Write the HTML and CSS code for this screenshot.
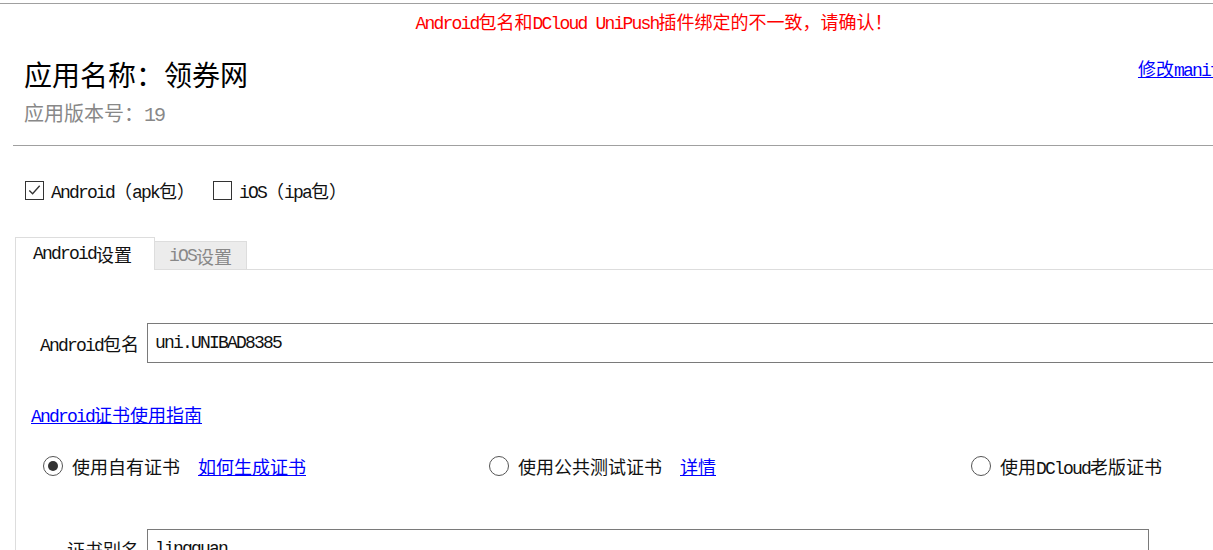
FILE: index.html
```html
<!DOCTYPE html>
<html lang="zh-CN">
<head>
<meta charset="utf-8">
<title>App 打包配置</title>
<link rel="stylesheet" href="styles.css">
</head>
<body>
<div class="page">
  <div class="topline"></div>
  <p class="warn"><span class="en">Android</span>包名和<span class="en">DCloud UniPush</span>插件绑定的不一致，请确认！</p>

  <header class="header">
    <div class="app-info">
      <h1 class="app-name">应用名称：领券网</h1>
      <p class="app-version">应用版本号：<span class="en">19</span></p>
    </div>
    <a class="link manifest-link" href="#">修改<span class="en">manifest.json</span></a>
  </header>

  <hr class="divider">

  <div class="platforms">
    <label class="check">
      <span class="box checked"><svg viewBox="0 0 18 18" width="18" height="18"><polyline points="3.5,9.5 7,13 14.5,4.5" fill="none" stroke="#333" stroke-width="1.4"/></svg></span>
      <span class="check-text"><span class="en">Android</span>（<span class="en">apk</span>包）</span>
    </label>
    <label class="check">
      <span class="box"></span>
      <span class="check-text"><span class="en">iOS</span>（<span class="en">ipa</span>包）</span>
    </label>
  </div>

  <div class="tabs">
    <div class="tab active"><span class="en">Android</span>设置</div>
    <div class="tab inactive"><span class="en">iOS</span>设置</div>
  </div>

  <section class="panel">
    <div class="form-row first">
      <span class="form-label"><span class="en">Android</span>包名</span>
      <input class="text-input wide" type="text" value="uni.UNIBAD8385">
    </div>

    <a class="link guide-link" href="#"><span class="en">Android</span>证书使用指南</a>

    <div class="radio-row">
      <div class="radio-item r1">
        <span class="radio checked"></span>
        <span class="radio-text">使用自有证书</span>
        <a class="link radio-link" href="#">如何生成证书</a>
      </div>
      <div class="radio-item r2">
        <span class="radio"></span>
        <span class="radio-text">使用公共测试证书</span>
        <a class="link radio-link" href="#">详情</a>
      </div>
      <div class="radio-item r3">
        <span class="radio"></span>
        <span class="radio-text">使用<span class="en">DCloud</span>老版证书</span>
      </div>
    </div>

    <div class="form-row second">
      <span class="form-label">证书别名</span>
      <input class="text-input narrow" type="text" value="lingquan">
    </div>
  </section>
</div>
</body>
</html>
```

FILE: styles.css
```css
html, body {
  margin: 0;
  padding: 0;
  overflow: hidden;
  background: #fff;
}

body {
  font-family: "Noto Sans CJK SC", "Noto Sans", sans-serif;
  font-size: 18px;
  color: #111;
}

.page {
  width: 1308px;
}

.en {
  font-family: "Liberation Mono", "DejaVu Sans Mono", monospace;
  letter-spacing: -0.1em;
  line-height: 0;
}

.topline {
  margin-top: 3px;
  border-top: 1px solid #a0a0a0;
}

.warn {
  margin: 5px 0 0;
  line-height: 24px;
  text-align: center;
  color: #ff0000;
}

.header {
  display: flex;
  justify-content: space-between;
  align-items: flex-start;
  margin-top: 23px;
  padding: 0 17px 0 24px;
}

.app-name {
  margin: 0;
  font-size: 28px;
  font-weight: normal;
  line-height: 36px;
  color: #000;
}

.app-version {
  margin: 7px 0 0;
  font-size: 20px;
  line-height: 28px;
  color: #888;
}

.link {
  color: #0000ff;
  text-decoration: underline;
}

.manifest-link {
  margin-top: 0;
  line-height: 24px;
}

.divider {
  margin: 18px 0 0 13px;
  border: 0;
  border-top: 1px solid #a0a0a0;
  height: 0;
}

.platforms {
  display: flex;
  align-items: center;
  margin-top: 32px;
  padding-left: 25px;
  height: 24px;
}

.check {
  display: flex;
  align-items: center;
  margin-right: 18px;
}

.box {
  box-sizing: border-box;
  width: 19px;
  height: 19px;
  border: 1px solid #333;
  background: #fff;
  display: flex;
  align-items: center;
  justify-content: center;
  margin-right: 7px;
}

.box svg {
  display: block;
}

.check-text {
  line-height: 24px;
  color: #111;
}

.tabs {
  display: flex;
  align-items: flex-end;
  margin-top: 35px;
  margin-left: 15px;
  border-bottom: 1px solid #ddd;
}

.tab {
  box-sizing: border-box;
  border: 1px solid #ddd;
  border-bottom: none;
  display: flex;
  align-items: center;
  line-height: 24px;
}

.tab.active {
  height: 33px;
  margin-bottom: -1px;
  padding: 0 22px 0 17px;
  background: #fff;
  color: #111;
}

.tab.inactive {
  height: 28px;
  padding: 0 14px;
  border-left: none;
  background: #ececec;
  color: #888;
}

.panel {
  margin-left: 15px;
  border-left: 1px solid #ddd;
  padding: 53px 0 0 15px;
}

.form-row {
  display: flex;
  align-items: center;
}

.form-label {
  width: 108px;
  margin-right: 8px;
  text-align: right;
  white-space: nowrap;
  line-height: 24px;
  color: #111;
}

.text-input {
  box-sizing: border-box;
  height: 40px;
  border: 1px solid #7a7a7a;
  padding: 0 7px;
  margin: 0;
  font-family: "Liberation Mono", "DejaVu Sans Mono", monospace;
  letter-spacing: -0.1em;
  font-size: 18px;
  color: #111;
  background: #fff;
  outline: none;
}

.text-input.wide {
  width: 1146px;
}

.text-input.narrow {
  width: 1002px;
}

.guide-link {
  display: inline-block;
  margin-top: 39px;
  line-height: 24px;
}

.radio-row {
  display: flex;
  align-items: center;
  margin-top: 27px;
  height: 24px;
  padding-left: 12px;
}

.radio-item {
  display: flex;
  align-items: center;
}

.radio-item.r1 {
  width: 446px;
}

.radio-item.r2 {
  width: 482px;
}

.radio {
  box-sizing: border-box;
  width: 20px;
  height: 20px;
  border: 1px solid #555;
  border-radius: 50%;
  margin-right: 9px;
  display: flex;
  align-items: center;
  justify-content: center;
  background: #fff;
}

.radio.checked::after {
  content: "";
  width: 10px;
  height: 10px;
  border-radius: 50%;
  background: #333;
}

.radio-text {
  line-height: 24px;
  color: #111;
}

.radio-link {
  margin-left: 18px;
  line-height: 24px;
}

.form-row.second {
  margin-top: 51px;
}
```
